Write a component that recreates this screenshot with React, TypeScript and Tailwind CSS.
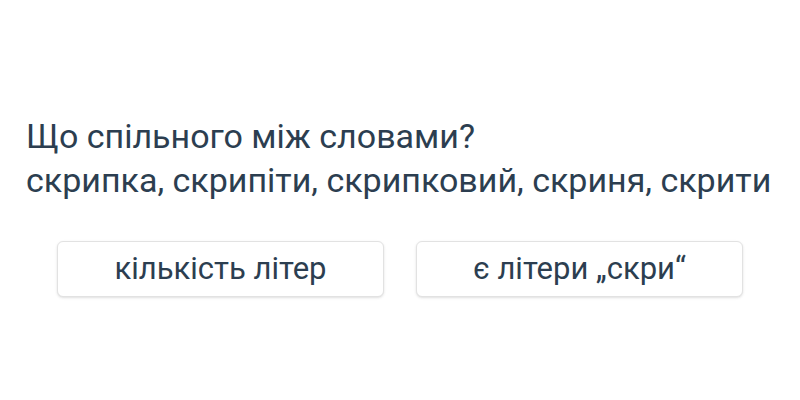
export default function App() {
  const options = ['кількість літер', 'є літери „скри“'];

  return (
    <div className="flex h-[400px] w-[800px] flex-col bg-white font-['Roboto',sans-serif] text-[#2c3e50]">
      <div className="mt-[114px] px-[26px] text-[34px] leading-[44px]">
        <p>Що спільного між словами?</p>
        <p>скрипка, скрипіти, скрипковий, скриня, скрити</p>
      </div>
      <div className="mt-[39px] flex justify-center gap-[32px]">
        {options.map((opt) => (
          <button
            key={opt}
            className="h-[56px] w-[327px] rounded-md border border-[#e2e2e2] bg-white text-[31px] text-[#2c3e50] shadow-sm"
          >
            {opt}
          </button>
        ))}
      </div>
    </div>
  );
}
